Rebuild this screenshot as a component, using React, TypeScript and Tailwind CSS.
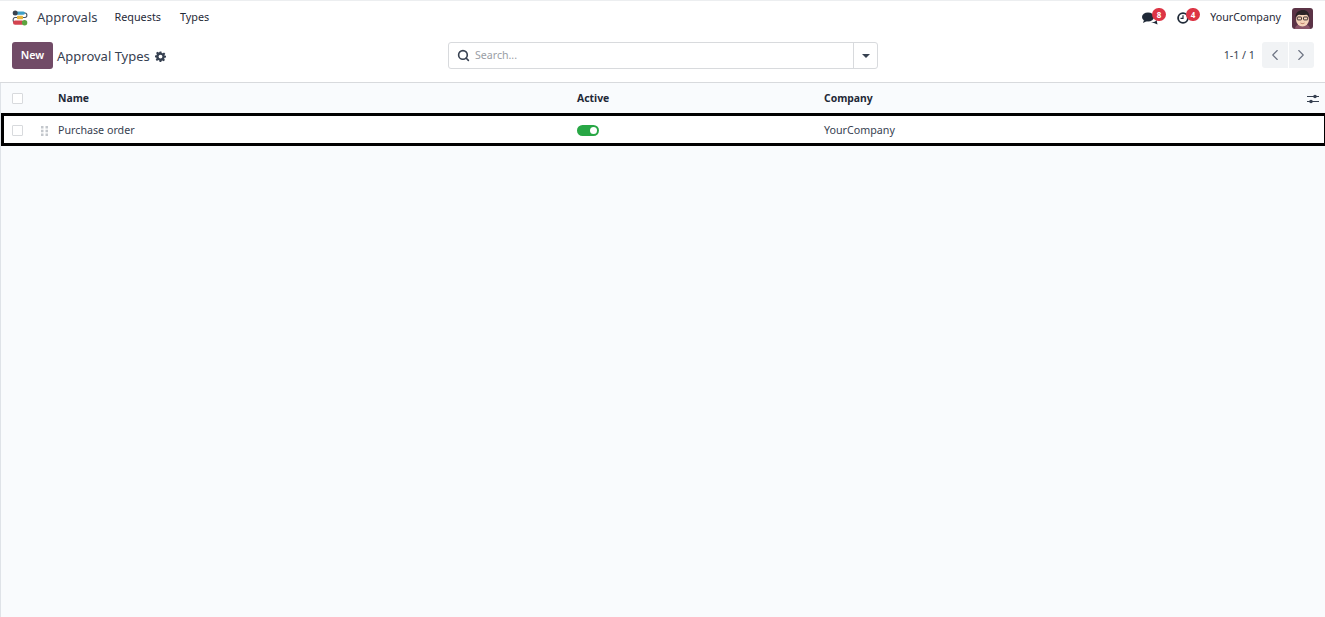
import { ChevronLeft, ChevronRight, Search } from 'lucide-react';

const font = "font-['Noto_Sans',sans-serif]";

function AppLogo() {
  return (
    <svg width="16" height="17" viewBox="0 0 16 17" className="shrink-0">
      <path d="M4 3h9c2.500 0 2.500 4.500 0 4.500H3c-2.500 0-2.500 5 0 5h9" fill="none" stroke="#4b5563" strokeWidth="1.100" />
      <rect x="4" y="1.500" width="9" height="3.200" rx="1.600" fill="#3f9fc6" />
      <circle cx="3.200" cy="3" r="2.500" fill="#39424e" />
      <rect x="5" y="5.800" width="6" height="3.400" rx=".8" fill="#e6b53c" />
      <rect x="1" y="10.500" width="11" height="4.300" rx="2.100" fill="#d4434f" />
      <circle cx="12.600" cy="12.700" r="2.700" fill="#5da33f" />
    </svg>
  );
}

function Avatar() {
  return (
    <svg width="21" height="21" viewBox="0 0 21 21" className="shrink-0 rounded-[3px]">
      <rect width="21" height="21" fill="#5b3346" />
      <path d="M3 21c0-3.500 3-5 7.500-5s7.500 1.500 7.500 5z" fill="#8a5568" />
      <ellipse cx="10.500" cy="11.500" rx="6.500" ry="7" fill="#f5d3b8" />
      <path d="M3.500 10C3 4 7.500 2 11 2s6.800 2.500 6.300 8c-.8-1.800-1.500-3-3-3.200-2.500.5-5 .2-7.300 0-1.800.4-2.700 1.500-3.500 3.200z" fill="#2b2326" />
      <rect x="5.300" y="9" width="4.200" height="2.900" rx=".6" fill="none" stroke="#2b2326" strokeWidth=".9" />
      <rect x="11.500" y="9" width="4.200" height="2.900" rx=".6" fill="none" stroke="#2b2326" strokeWidth=".9" />
      <path d="M8.500 15c1.300.8 2.700.8 4 0" fill="none" stroke="#a8604c" strokeWidth=".8" />
    </svg>
  );
}

function Badge({ n, className }: { n: number; className: string }) {
  return (
    <span className={`absolute top-[-4px] flex h-[13px] w-[14px] items-center justify-center rounded-full bg-[#dc3545] text-[8px] font-bold text-white ${className}`}>
      {n}
    </span>
  );
}

function Checkbox() {
  return <span className="block h-[11px] w-[11px] rounded-[1px] border border-[#d8dadd] bg-white" />;
}

function Gear() {
  return (
    <svg width="11" height="11" viewBox="0 0 24 24" className="ml-[5px]">
      <path
        fill="#374151"
        fillRule="evenodd"
        d="M10 1h4l.7 3.200 2.200.9 2.800-1.800 2.800 2.800-1.800 2.800.9 2.200L24 10v4l-3.200.7-.9 2.200 1.800 2.800-2.800 2.800-2.800-1.800-2.200.9L14 24h-4l-.7-3.200-2.200-.9-2.800 1.800-2.800-2.800 1.800-2.800-.9-2.200L0 14v-4l3.200-.7.9-2.200-1.800-2.800 2.800-2.800 2.800 1.800 2.200-.9zM12 8a4.200 4.200 0 1 0 0 8.400A4.200 4.200 0 0 0 12 8z"
      />
    </svg>
  );
}

export default function App() {
  return (
    <div className={`${font} flex h-[617px] w-[1325px] flex-col overflow-hidden bg-white text-[#374151]`}>
      <header className="flex h-[35px] shrink-0 items-center border-t border-[#eceef0] pl-3 pr-[12px]">
        <AppLogo />
        <span className="ml-[9px] text-[13px]">Approvals</span>
        <nav className="mb-[2px] ml-[17px] flex gap-[19px] text-[10.800px] text-[#1f2937]">
          <span>Requests</span>
          <span>Types</span>
        </nav>
        <div className="ml-auto flex items-center">
          <div className="relative h-[12px] w-[16px]">
            <svg width="16" height="13" viewBox="0 0 16 13">
              <ellipse cx="6" cy="5" rx="6" ry="4.500" fill="#1f2937" />
              <path d="M2 8 1 11l4-2z" fill="#1f2937" />
              <path d="M9 10.500c2.500 0 5-.8 5.500-3l1 5-3.500-1.500z" fill="#1f2937" />
            </svg>
            <Badge n={8} className="left-[10px]" />
          </div>
          <div className="relative ml-[19px] h-[12px] w-[14px]">
            <svg width="12" height="12" viewBox="0 0 13 13">
              <circle cx="6.500" cy="6.500" r="5.300" fill="none" stroke="#1f2937" strokeWidth="2" />
              <path d="M6.500 3.500v3.300H3.800" fill="none" stroke="#1f2937" strokeWidth="1.300" />
            </svg>
            <Badge n={4} className="left-[9px]" />
          </div>
          <span className="mb-[2px] ml-[19px] text-[10.700px] text-[#1f2937]">YourCompany</span>
          <span className="ml-[11px]"><Avatar /></span>
        </div>
      </header>

      <div className="relative flex h-[48px] shrink-0 items-start border-b border-[#d8dadd] pl-3 pr-[11px] pt-[7px]">
        <button className="h-[27px] w-[41px] rounded-[3px] bg-[#714b67] text-[10.700px] font-semibold text-white">New</button>
        <span className="ml-[4px] mt-[5px] text-[13px] leading-[18px]">Approval Types</span>
        <span className="mt-[9px]"><Gear /></span>
        <div className="absolute left-[448px] top-[7px] flex h-[27px] w-[430px] items-center rounded-[3px] border border-[#d8dadd] bg-white">
          <Search size={13} strokeWidth={3} className="ml-[8px] text-[#374151]" />
          <span className="ml-[5px] text-[10.600px] text-[#9a9ea5]">Search...</span>
          <span className="ml-auto flex h-full w-[24px] items-center justify-center border-l border-[#d8dadd]">
            <span className="h-0 w-0 border-x-[4px] border-t-[4px] border-x-transparent border-t-[#374151]" />
          </span>
        </div>
        <div className="ml-auto flex items-center">
          <span className="mr-[7px] text-[10.700px]">1-1 / 1</span>
          <div className="flex h-[26px] gap-px">
            <span className="flex w-[25.500px] items-center justify-center rounded-l-[3px] bg-[#f1f3f5]"><ChevronLeft size={18} strokeWidth={1.500} className="text-[#6b7280]" /></span>
            <span className="flex w-[25.500px] items-center justify-center rounded-r-[3px] bg-[#f1f3f5]"><ChevronRight size={18} strokeWidth={1.500} className="text-[#6b7280]" /></span>
          </div>
        </div>
      </div>

      <main className="flex min-h-0 flex-1 flex-col border-l border-[#dfe3e8] bg-[#f9fbfd]">
        <div className="grid h-[30px] shrink-0 grid-cols-[57px_519px_247px_1fr] items-center pt-[2px] text-[10.400px] font-bold text-[#1f2937]">
          <span className="mb-[2px] pl-[11px]"><Checkbox /></span>
          <span>Name</span>
          <span>Active</span>
          <div className="flex items-center justify-between pr-[6px]">
            <span>Company</span>
            <svg width="12" height="10" viewBox="0 0 12 10">
              <path d="M0 2.500h12M0 7.500h12" stroke="#374151" strokeWidth="1.100" />
              <circle cx="8" cy="2.500" r="1.800" fill="#374151" />
              <circle cx="4" cy="7.500" r="1.800" fill="#374151" />
            </svg>
          </div>
        </div>
        <div className="mr-[-2px] grid h-[33px] shrink-0 grid-cols-[57px_519px_247px_1fr] items-center border-[3px] border-black bg-white pt-[2px] text-[10.700px] text-[#374151]">
          <div className="flex items-center">
            <span className="ml-[8px]"><Checkbox /></span>
            <svg width="7" height="10" viewBox="0 0 7 10" className="ml-[18px]" fill="#c3c7cc">
              <rect x="0" y="0" width="2.500" height="2.500" /><rect x="4.500" y="0" width="2.500" height="2.500" />
              <rect x="0" y="3.750" width="2.500" height="2.500" /><rect x="4.500" y="3.750" width="2.500" height="2.500" />
              <rect x="0" y="7.500" width="2.500" height="2.500" /><rect x="4.500" y="7.500" width="2.500" height="2.500" />
            </svg>
          </div>
          <span className="-ml-[3px]">Purchase order</span>
          <span className="-ml-[3px] flex h-[11px] w-[22px] items-center justify-end rounded-full bg-[#28a745] pr-[2px]">
            <span className="h-[7px] w-[7px] rounded-full bg-white" />
          </span>
          <span className="-ml-[3px]">YourCompany</span>
        </div>
      </main>
    </div>
  );
}
